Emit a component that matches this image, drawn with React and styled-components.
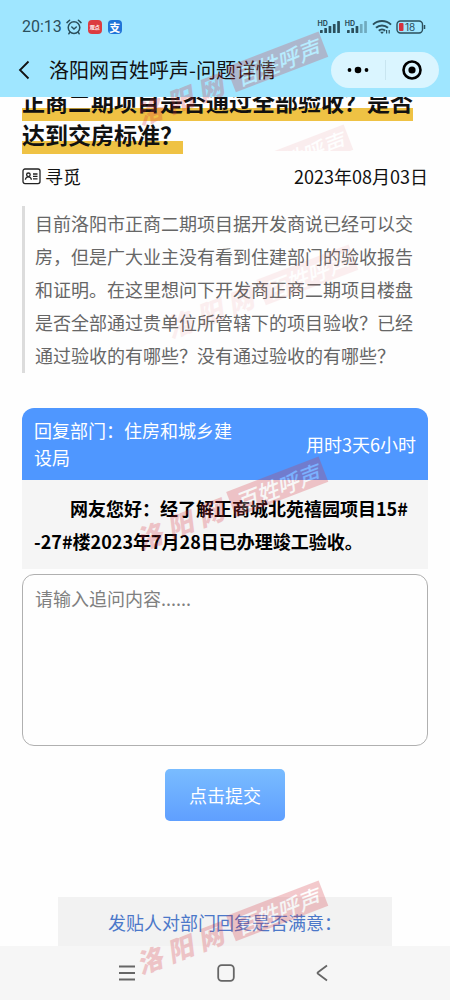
import React, { useState } from "react";
import styled, { createGlobalStyle } from "styled-components";

const GlobalStyle = createGlobalStyle`
  * {
    box-sizing: border-box;
  }
  body {
    margin: 0;
    background: #fefefe;
    color: #111;
    font-family: "Noto Sans CJK SC", "Noto Sans", sans-serif;
    font-size: 18px;
  }
  h1, p, blockquote {
    margin: 0;
  }
  button, textarea {
    font-family: inherit;
    font-size: inherit;
  }
`;

const Page = styled.div`
  position: relative;
  display: flex;
  flex-direction: column;
  height: 100vh;
  overflow: hidden;
`;
const Header = styled.header`
  flex: none;
  padding-bottom: 9px;
  background: #9fe6ff;
`;
const StatusBar = styled.div`
  display: flex;
  align-items: center;
  justify-content: space-between;
  height: 52px;
  padding: 2px 24px 0 22px;
  color: #2b4f5c;
`;
const StatusGroup = styled.div`
  display: flex;
  align-items: center;
  gap: ${props => props.$gap}px;
`;
const Clock = styled.span`
  font-family: Roboto, sans-serif;
  font-size: 16px;
  line-height: 20px;
`;
const AppBadge = styled.span`
  display: flex;
  align-items: center;
  justify-content: center;
  width: 14px;
  height: 14px;
  border-radius: 4px;
  background: ${props => props.$color};
  color: #fff;
  font-size: ${props => props.$size}px;
  font-weight: 700;
  line-height: 14px;
  white-space: nowrap;
`;
const Signal = styled.span`
  display: flex;
  align-items: center;
`;
const Hd = styled.span`
  align-self: flex-start;
  font-family: Inter, sans-serif;
  font-size: 7px;
  font-weight: 700;
  line-height: 7px;
  margin-right: -9px;
`;
const TitleBar = styled.div`
  display: flex;
  align-items: center;
  height: 36px;
  padding: 0 11px 0 16px;
`;
const IconButton = styled.button`
  display: flex;
  align-items: center;
  justify-content: center;
  padding: 0;
  border: none;
  background: none;
  color: inherit;
`;
const PageName = styled.span`
  flex: 1;
  margin-left: 17px;
  font-size: 20px;
  line-height: 30px;
  white-space: nowrap;
`;
const Capsule = styled.div`
  display: flex;
  width: 108px;
  height: 36px;
  border-radius: 18px;
  background: #daf5ff;

  ${IconButton} {
    flex: 1;
  }
  ${IconButton} + ${IconButton} {
    position: relative;
  }
  ${IconButton} + ${IconButton}:before {
    content: "";
    position: absolute;
    left: 0;
    top: 8px;
    height: 20px;
    border-left: 1px solid #c8e5f0;
  }
`;

const Main = styled.main`
  flex: 1;
  min-height: 0;
  overflow: hidden;
  padding: 0 22px;
`;
const Title = styled.h1`
  margin-top: -12px;
  font-size: 23px;
  font-weight: 700;
  line-height: 33px;

  span {
    padding-bottom: 3px;
    background: linear-gradient(#efc244, #efc244) bottom / 100% 13px no-repeat;
    -webkit-box-decoration-break: clone;
    box-decoration-break: clone;
  }
`;
const Meta = styled.div`
  display: flex;
  justify-content: space-between;
  margin-top: 12px;
  line-height: 26px;
`;
const Author = styled.span`
  display: flex;
  align-items: center;
  gap: 4px;
`;
const Question = styled.blockquote`
  margin-top: 17px;
  padding: 1px 6px 1px 10px;
  border-left: 3px solid #dcdcdc;
  color: #666;
  line-height: 33px;
`;
const Reply = styled.section`
  margin-top: 35px;
  border-radius: 12px 12px 0 0;
  overflow: hidden;
`;
const ReplyHead = styled.div`
  display: flex;
  align-items: center;
  justify-content: space-between;
  padding: 9px 12px;
  background: #4f97ff;
  color: #fff;
  line-height: 27px;
`;
const Department = styled.span`
  width: 55%;
`;
const ReplyBody = styled.p`
  padding: 12px 16px 11px 12px;
  background: #f5f5f5;
  color: #000;
  font-weight: 700;
  line-height: 33px;
  text-indent: 2em;
  word-break: break-all;
`;
const FollowUp = styled.textarea`
  display: block;
  width: 100%;
  height: 172px;
  margin-top: 5px;
  padding: 11px 12px;
  border: 1px solid #b0b0b0;
  border-radius: 12px;
  background: #fefefe;
  line-height: 24px;
  resize: none;
  outline: none;

  &::placeholder {
    color: #808080;
  }
`;
const Submit = styled.button`
  display: block;
  width: 120px;
  height: 52px;
  margin: 23px auto 0;
  border: none;
  border-radius: 5px;
  background: linear-gradient(#79bcff, #5f9fff);
  color: #fff;
`;
const Survey = styled.p`
  margin: 76px 36px 0;
  padding: 12px 0 24px;
  background: #f2f2f2;
  color: #4c78c9;
  line-height: 27px;
  text-align: center;
`;

const SystemNav = styled.nav`
  flex: none;
  display: flex;
  align-items: center;
  justify-content: space-between;
  height: 54px;
  padding: 0 122px 0 119px;
  background: #f6f6f6;
  color: #666;
`;

const Watermarks = styled.div`
  position: absolute;
  top: 0;
  left: 0;
  right: 0;
  height: ${props => props.$height};
  overflow: hidden;
  pointer-events: none;
`;
const Mark = styled.div`
  position: absolute;
  top: ${props => props.$top}px;
  left: calc(50% + ${props => props.$shift}px);
  display: flex;
  align-items: center;
  height: 28px;
  color: #d6303c;
  font-weight: 900;
  font-size: 26px;
  line-height: 28px;
  white-space: nowrap;
  opacity: ${props => props.$opacity};
  transform: rotate(-21deg);
`;
const MarkName = styled.span`
  width: 104px;
  padding-right: 6px;
  display: flex;
  justify-content: space-around;
  font-style: italic;
`;
const MarkSeal = styled.span`
  width: 99px;
  height: 27px;
  background: #d6303c;
  color: #fff;
  font-size: 22px;
  font-style: italic;
  font-weight: 500;
  line-height: 26px;
  text-align: center;
`;

const Watermark = ({ top, shift = -98, opacity = 0.25, name = "洛阳网" }) => (
  <Mark $top={top} $shift={shift} $opacity={opacity}>
    <MarkName>
      {name.split("").map(char => (
        <span key={char}>{char}</span>
      ))}
    </MarkName>
    <MarkSeal>百姓呼声</MarkSeal>
  </Mark>
);

const AlarmIcon = () => (
  <svg width="16" height="16" viewBox="0 0 16 16" fill="none" stroke="currentColor" strokeWidth="1.5" strokeLinecap="round">
    <circle cx="8" cy="8.6" r="5.8" />
    <path d="M1 3.6 3.6 1.2M15 3.6 12.4 1.2M5.8 8 8 10l2.3-2M3.8 13.2 2.8 14.8M12.2 13.2l1 1.6" />
  </svg>
);

const SignalBars = ({ level }) => (
  <svg width="22" height="14" viewBox="0 0 22 14" fill="currentColor">
    {[3, 5, 7, 9, 12].map((h, i) => (
      <rect
        key={h}
        x={1 + i * 4.3}
        y={13 - h}
        width="2.7"
        height={h}
        rx="0.6"
        opacity={i < level ? 1 : 0.4}
      />
    ))}
  </svg>
);

const WifiIcon = () => (
  <svg width="20" height="16" viewBox="0 0 20 16" fill="none" stroke="currentColor" strokeWidth="2">
    <path d="M1 5.6c5-4.8 13-4.8 18 0M4 8.8c3.4-3.2 8.6-3.2 12 0M6.8 11.7c1.8-1.7 4.6-1.7 6.4 0" />
    <path d="m10 15-2-2.3h4z" fill="currentColor" stroke="none" />
    <path d="M14.6 11v3.5M17.2 11v3.5" strokeWidth="1.2" />
  </svg>
);

const BatteryIcon = () => (
  <svg width="30" height="14" viewBox="0 0 30 14" fill="none">
    <rect x="1" y="1" width="25.5" height="12" rx="3.5" stroke="#2b4f5c" strokeWidth="1.4" />
    <rect x="3" y="3" width="4.5" height="8" rx="1" fill="#d5303c" />
    <path d="M28.5 5v4" stroke="#2b4f5c" strokeWidth="1.5" />
    <text x="9" y="11" fill="#2b4f5c" fontSize="10" fontFamily="Inter, sans-serif">
      18
    </text>
  </svg>
);

const BackIcon = () => (
  <svg width="16" height="20" viewBox="0 0 16 20" fill="none" stroke="currentColor" strokeWidth="1.8">
    <path d="M12.5 1.5 4 10l8.5 8.5" />
  </svg>
);

const CardIcon = () => (
  <svg width="19" height="17" viewBox="0 0 19 17" fill="none" stroke="#222" strokeWidth="1.3">
    <rect x="1" y="1" width="17" height="14.6" rx="2" />
    <circle cx="6.4" cy="6.8" r="1.8" />
    <path d="M3.4 11.8c.2-2 1.3-3 3-3s2.8 1 3 3M11 6h4.5M11 8.4h4.5M11 10.8h4.5" />
  </svg>
);

const App = () => {
  const [text, setText] = useState("");
  return (
    <Page>
      <GlobalStyle />
      <Header>
        <StatusBar>
          <StatusGroup $gap={6}>
            <StatusGroup $gap={4}>
              <Clock>20:13</Clock>
              <AlarmIcon />
            </StatusGroup>
            <AppBadge $color="#dc3c40" $size={5}>
              观点
            </AppBadge>
            <AppBadge $color="#1f74d8" $size={11}>
              支
            </AppBadge>
          </StatusGroup>
          <StatusGroup $gap={4}>
            <Signal>
              <Hd>HD</Hd>
              <SignalBars level={5} />
            </Signal>
            <Signal>
              <Hd>HD</Hd>
              <SignalBars level={3} />
            </Signal>
            <WifiIcon />
            <BatteryIcon />
          </StatusGroup>
        </StatusBar>
        <TitleBar>
          <IconButton aria-label="返回">
            <BackIcon />
          </IconButton>
          <PageName>洛阳网百姓呼声-问题详情</PageName>
          <Capsule>
            <IconButton aria-label="更多">
              <svg width="22" height="8" viewBox="0 0 22 8">
                <circle cx="2.5" cy="4" r="1.9" />
                <circle cx="11" cy="4" r="3.3" />
                <circle cx="19.5" cy="4" r="1.9" />
              </svg>
            </IconButton>
            <IconButton aria-label="关闭">
              <svg width="20" height="20" viewBox="0 0 20 20">
                <circle cx="10" cy="10" r="8.5" fill="none" stroke="#000" strokeWidth="2.6" />
                <circle cx="10" cy="10" r="3.6" />
              </svg>
            </IconButton>
          </Capsule>
        </TitleBar>
      </Header>

      <Main>
        <Title>
          <span>正商二期项目是否通过全部验收？是否达到交房标准？</span>
        </Title>
        <Meta>
          <Author>
            <CardIcon />
            寻觅
          </Author>
          <time dateTime="2023-08-03">2023年08月03日</time>
        </Meta>
        <Question>
          目前洛阳市正商二期项目据开发商说已经可以交房，但是广大业主没有看到住建部门的验收报告和证明。在这里想问下开发商正商二期项目楼盘是否全部通过贵单位所管辖下的项目验收？已经通过验收的有哪些？没有通过验收的有哪些？
        </Question>
        <Reply>
          <ReplyHead>
            <Department>回复部门：住房和城乡建设局</Department>
            <span>用时3天6小时</span>
          </ReplyHead>
          <ReplyBody>
            网友您好：经了解正商城北苑禧园项目15#-27#楼2023年7月28日已办理竣工验收。
          </ReplyBody>
        </Reply>
        <FollowUp
          aria-label="追问内容"
          placeholder="请输入追问内容......"
          value={text}
          onChange={e => setText(e.target.value)}
        />
        <Submit>点击提交</Submit>
        <Survey>发贴人对部门回复是否满意：</Survey>
      </Main>

      <SystemNav>
        <IconButton aria-label="菜单">
          <svg width="16" height="16" viewBox="0 0 16 16" stroke="currentColor" strokeWidth="1.8">
            <path d="M0 1.5h16M0 8h16M0 14.5h16" />
          </svg>
        </IconButton>
        <IconButton aria-label="主页">
          <svg width="18" height="18" viewBox="0 0 18 18" fill="none" stroke="currentColor" strokeWidth="1.8">
            <rect x="1.2" y="1.2" width="15.6" height="15.6" rx="3.5" />
          </svg>
        </IconButton>
        <IconButton aria-label="后退">
          <svg width="12" height="18" viewBox="0 0 12 18" fill="none" stroke="currentColor" strokeWidth="1.8">
            <path d="M11 1.5 2 8.2q-1 .8 0 1.6l9 6.7" />
          </svg>
        </IconButton>
      </SystemNav>

      <Watermarks $height="100%" aria-hidden="true">
        <Watermark top={66} />
        <Watermark top={279} shift={-68} opacity={0.07} />
        <Watermark top={491} />
        <Watermark top={915} />
      </Watermarks>
      <Watermarks $height="151px" aria-hidden="true">
        <Watermark top={159} shift={-73} opacity={0.08} name="" />
      </Watermarks>
    </Page>
  );
};

export default App;
